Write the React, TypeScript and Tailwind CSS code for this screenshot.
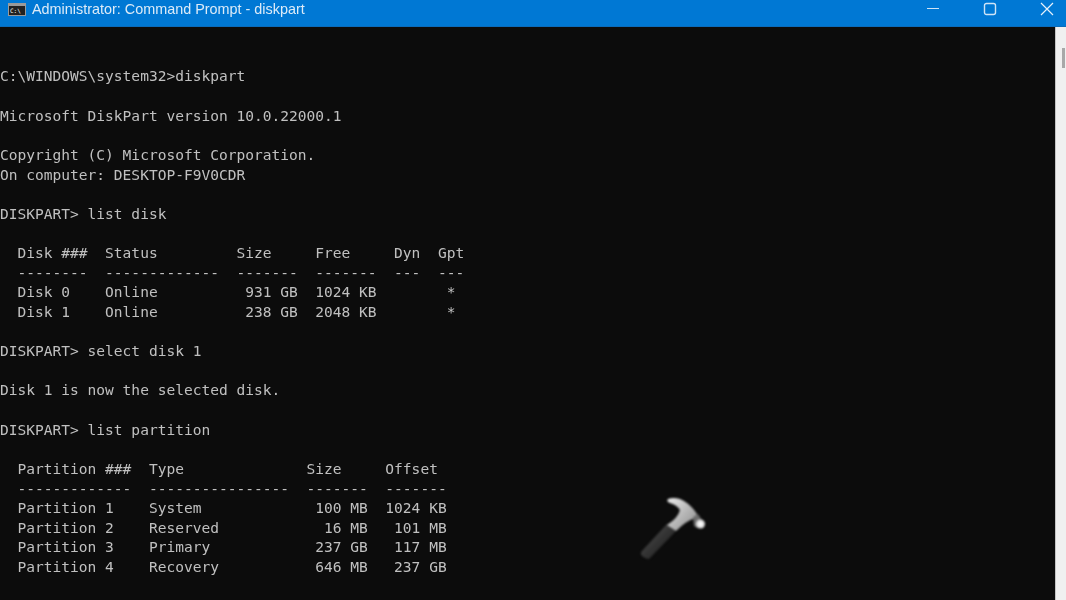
const lines = [
  'C:\\WINDOWS\\system32>diskpart',
  '',
  'Microsoft DiskPart version 10.0.22000.1',
  '',
  'Copyright (C) Microsoft Corporation.',
  'On computer: DESKTOP-F9V0CDR',
  '',
  'DISKPART> list disk',
  '',
  '  Disk ###  Status         Size     Free     Dyn  Gpt',
  '  --------  -------------  -------  -------  ---  ---',
  '  Disk 0    Online          931 GB  1024 KB        *',
  '  Disk 1    Online          238 GB  2048 KB        *',
  '',
  'DISKPART> select disk 1',
  '',
  'Disk 1 is now the selected disk.',
  '',
  'DISKPART> list partition',
  '',
  '  Partition ###  Type              Size     Offset',
  '  -------------  ----------------  -------  -------',
  '  Partition 1    System             100 MB  1024 KB',
  '  Partition 2    Reserved            16 MB   101 MB',
  '  Partition 3    Primary            237 GB   117 MB',
  '  Partition 4    Recovery           646 MB   237 GB',
  '',
  'DISKPART> select partition 4',
];

function Hammer() {
  return (
    <svg width="70" height="66" viewBox="0 0 70 66" className="absolute left-[640px] top-[496px] blur-[0.8px]">
      <defs>
        <linearGradient id="head" x1="0" y1="0" x2="1" y2="1">
          <stop offset="0" stopColor="#ececec" />
          <stop offset="0.55" stopColor="#b4b4b4" />
          <stop offset="1" stopColor="#8c8c8c" />
        </linearGradient>
        <linearGradient id="grip" x1="0" y1="0" x2="1" y2="1">
          <stop offset="0" stopColor="#5a5a5a" />
          <stop offset="0.5" stopColor="#333333" />
          <stop offset="1" stopColor="#1a1a1a" />
        </linearGradient>
      </defs>
      <path d="M1 56 L27 28 L36 35 L9 63 Q5 63 1 59 Z" fill="url(#grip)" />
      <path d="M27 29 Q38 22 40 14 Q37 9 30 7 Q26 6 28 3 Q33 1 40 3 Q50 7 57 18 L55 22 Q46 25 36 35 Z" fill="url(#head)" />
      <path d="M53 21 L58 18 L62 24 L57 32 L54 30 Z" fill="#6c6c6c" />
      <circle cx="60.5" cy="28" r="4.5" fill="#dedede" />
      <circle cx="60.5" cy="28" r="2" fill="#ffffff" />
    </svg>
  );
}

export default function App() {
  return (
    <div className="relative h-[600px] w-[1066px] overflow-hidden bg-white">
      <div className="flex h-[27px] items-start border-b border-[#0a6cbc] bg-[#0078d4] text-white">
        <div className="ml-[8px] mt-[3px] flex h-[13px] w-[18px] items-center border border-t-[3px] border-[#9a9a9a] bg-[#222] pl-[1px] font-['DejaVu_Sans_Mono',monospace] text-[6px] leading-none text-white">
          C:\
        </div>
        <span className="ml-[6px] mt-[1px] font-['Liberation_Sans',sans-serif] text-[14.4px] leading-[17px] text-[#dcebf8] blur-[0.3px]">
          Administrator: Command Prompt - diskpart
        </span>
        <div className="ml-auto mt-[2px] flex items-center">
          <svg width="14" height="14" viewBox="0 0 14 14" className="mr-[43px] stroke-[#cfe4f6]">
            <path d="M1 6.5H13" strokeWidth="1" fill="none" />
          </svg>
          <svg width="14" height="14" viewBox="0 0 14 14" className="mr-[43px] stroke-[#cfe4f6]">
            <rect x="1.5" y="1.5" width="11" height="11" rx="2" strokeWidth="1.4" fill="none" />
          </svg>
          <svg width="14" height="14" viewBox="0 0 14 14" className="mr-[12px] stroke-[#e6f1fb]">
            <path d="M1 1L13 13M13 1L1 13" strokeWidth="1.2" fill="none" />
          </svg>
        </div>
      </div>
      <div className="flex h-[573px]">
        <div className="h-full w-[1055px] overflow-hidden bg-[#0c0c0c] pt-[39.4px]">
          <pre className="font-['DejaVu_Sans_Mono',monospace] text-[14.55px] leading-[19.63px] text-[#c0c0c0] blur-[0.55px]">
            {lines.join('\n')}
          </pre>
        </div>
        <div className="flex-1 border-l border-[#c4c4c4] bg-[#f0f0f0] pl-[6px] pt-[21px]">
          <div className="h-[20px] w-[3px] bg-[#a8a8a8]" />
        </div>
      </div>
      <Hammer />
    </div>
  );
}
